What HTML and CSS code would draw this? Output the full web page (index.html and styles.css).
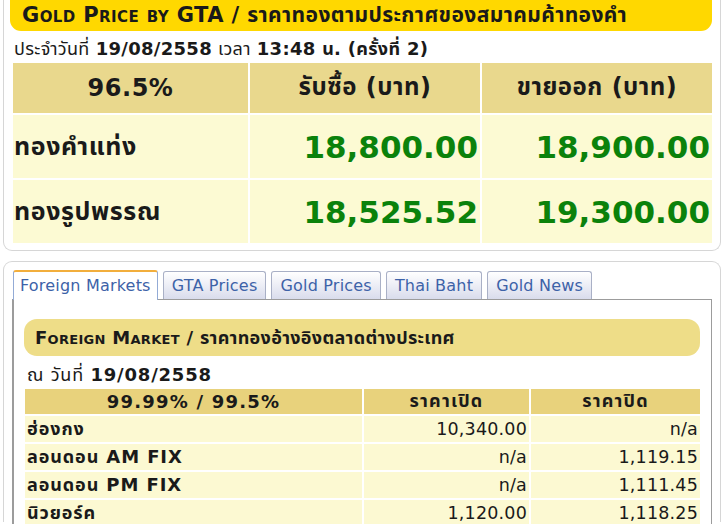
FILE: index.html
```html
<!DOCTYPE html>
<html lang="th">
<head>
<meta charset="utf-8">
<title>Gold Price by GTA</title>
<link rel="stylesheet" href="styles.css">
</head>
<body>
<div class="panel panel-top">
  <div class="title">Gold Price by GTA / ราคาทองตามประกาศของสมาคมค้าทองคำ</div>
  <div class="stamp">ประจำวันที่ <b>19/08/2558</b> เวลา <b>13:48 น. (ครั้งที่ 2)</b></div>
  <div class="board">
    <div class="bh">96.5%</div>
    <div class="bh">รับซื้อ (บาท)</div>
    <div class="bh">ขายออก (บาท)</div>
    <div class="bl">ทองคำแท่ง</div>
    <div class="bn">18,800.00</div>
    <div class="bn">18,900.00</div>
    <div class="bl">ทองรูปพรรณ</div>
    <div class="bn">18,525.52</div>
    <div class="bn">19,300.00</div>
  </div>
</div>

<div class="panel panel-tabs">
  <div class="tabs">
    <div class="tab active">Foreign Markets</div>
    <div class="tab">GTA Prices</div>
    <div class="tab">Gold Prices</div>
    <div class="tab">Thai Baht</div>
    <div class="tab">Gold News</div>
  </div>
  <div class="tabbody">
    <div class="subtitle">Foreign Market / ราคาทองอ้างอิงตลาดต่างประเทศ</div>
    <div class="stamp2">ณ วันที่ <b>19/08/2558</b></div>
    <div class="market">
      <div class="mh">99.99% / 99.5%</div>
      <div class="mh">ราคาเปิด</div>
      <div class="mh">ราคาปิด</div>
      <div class="ml">ฮ่องกง</div>
      <div class="mn">10,340.00</div>
      <div class="mn">n/a</div>
      <div class="ml">ลอนดอน AM FIX</div>
      <div class="mn">n/a</div>
      <div class="mn">1,119.15</div>
      <div class="ml">ลอนดอน PM FIX</div>
      <div class="mn">n/a</div>
      <div class="mn">1,111.45</div>
      <div class="ml">นิวยอร์ค</div>
      <div class="mn">1,120.00</div>
      <div class="mn">1,118.25</div>
    </div>
  </div>
</div>
</body>
</html>
```

FILE: styles.css
```css
html, body {
  margin: 0;
  padding: 0;
  background: #ffffff;
  overflow: hidden;
}
body {
  font-family: "DejaVu Sans", "Noto Sans Thai", "Noto Sans", sans-serif;
  color: #1a1a1a;
  width: 728px;
  height: 524px;
}
.panel {
  margin: 0 7px 0 3px;
  border: 1px solid #d6d6d6;
  border-radius: 9px;
  background: #ffffff;
}
.panel-top {
  border-top: none;
  border-radius: 0 0 9px 9px;
  padding: 0 8px 7px 9px;
}
.title {
  margin-left: -3px;
  height: 31px;
  line-height: 30px;
  background: #ffd800;
  border-radius: 0 0 11px 11px;
  padding-left: 12px;
  font-weight: bold;
  font-variant: small-caps;
  font-size: 21px;
  letter-spacing: 0.4px;
  white-space: nowrap;
}
.stamp {
  height: 32px;
  line-height: 36px;
  padding-left: 1px;
  font-size: 18px;
  letter-spacing: 0.3px;
  white-space: nowrap;
}
.board {
  display: grid;
  grid-template-columns: 235px 230px 230px;
  grid-template-rows: 50px 63px 63px;
  column-gap: 2px;
  row-gap: 2px;
}
.bh {
  background: #e9d88d;
  display: flex;
  align-items: center;
  justify-content: center;
  font-weight: bold;
  font-size: 24px;
  letter-spacing: 0.5px;
  white-space: nowrap;
}
.bl {
  background: #fcfad3;
  display: flex;
  align-items: center;
  padding-left: 1px;
  font-weight: bold;
  font-size: 25px;
  letter-spacing: 0.6px;
  white-space: nowrap;
}
.bn {
  background: #fcfad3;
  display: flex;
  align-items: center;
  justify-content: flex-end;
  padding-right: 2px;
  font-weight: bold;
  font-size: 31px;
  color: #0b820b;
  white-space: nowrap;
}
.panel-tabs {
  margin-top: 10px;
  padding: 8px 8px 0 8px;
  border-bottom: none;
  border-radius: 9px 9px 0 0;
  height: 252px;
}
.tabs {
  display: flex;
  gap: 5px;
  margin-left: 1px;
  height: 29px;
  align-items: flex-end;
}
.tab {
  height: 27px;
  line-height: 27px;
  padding: 0 8px;
  border: 1px solid #a9b0c6;
  border-bottom: none;
  border-radius: 3px 3px 0 0;
  background: linear-gradient(#ffffff, #d9dcec);
  color: #3d62a8;
  font-size: 16px;
  letter-spacing: 0.2px;
  white-space: nowrap;
}
.tab.active {
  height: 28px;
  padding: 0 6px;
  border: 1px solid #93abd6;
  border-top: 2px solid #f2ae3c;
  border-bottom: none;
  background: #ffffff;
  position: relative;
  top: 1px;
}
.tabbody {
  border: 1px solid #9c9c9c;
  border-left-width: 2px;
  border-bottom: none;
  padding: 19px 11px 0 10px;
  height: 222px;
}
.subtitle {
  height: 37px;
  line-height: 37px;
  background: #eedd88;
  border-radius: 13px;
  padding-left: 11px;
  font-weight: bold;
  font-variant: small-caps;
  font-size: 18px;
  letter-spacing: 0.3px;
  white-space: nowrap;
}
.stamp2 {
  height: 33px;
  line-height: 37px;
  padding-left: 3px;
  font-size: 18px;
  letter-spacing: 0.8px;
  white-space: nowrap;
}
.market {
  margin-left: 1px;
  display: grid;
  grid-template-columns: 337px 165px 169px;
  grid-template-rows: 25px 26px 26px 26px 26px;
  column-gap: 2px;
  row-gap: 2px;
}
.mh {
  background: #e8d27c;
  display: flex;
  align-items: center;
  justify-content: center;
  font-weight: bold;
  font-size: 18px;
  letter-spacing: 1.2px;
  white-space: nowrap;
}
.ml {
  background: #fcf9d2;
  display: flex;
  align-items: center;
  padding-left: 2px;
  font-weight: bold;
  font-size: 18px;
  letter-spacing: 0.9px;
  white-space: nowrap;
}
.mn {
  background: #fcf9d2;
  display: flex;
  align-items: center;
  justify-content: flex-end;
  padding-right: 2px;
  font-size: 17.5px;
  letter-spacing: 0.2px;
  white-space: nowrap;
}
```
